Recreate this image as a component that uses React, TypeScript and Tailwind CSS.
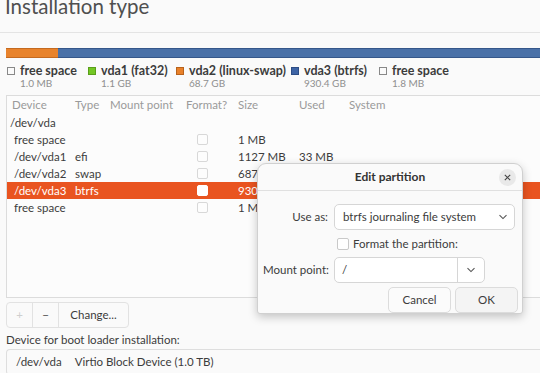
import React from "react";

const Check = ({ white = false }: { white?: boolean }) => (
  <div
    className={
      white
        ? "w-[11px] h-[11px] rounded-[2px] bg-white border border-white"
        : "w-[11px] h-[11px] rounded-[2px] bg-[#fdfdfd] border border-[#d8d8d8]"
    }
  />
);

const Chevron = () => (
  <svg width="10" height="6" viewBox="0 0 10 6" fill="none">
    <path d="M1.5 1.2 L5 4.6 L8.5 1.2" stroke="#555" strokeWidth="1.1" />
  </svg>
);

type Row = { dev: string; type?: string; size?: string; used?: string; check?: boolean; sel?: boolean; root?: boolean };

const rows: Row[] = [
  { dev: "/dev/vda", root: true },
  { dev: "free space", size: "1 MB", check: true },
  { dev: "/dev/vda1", type: "efi", size: "1127 MB", used: "33 MB", check: true },
  { dev: "/dev/vda2", type: "swap", size: "68719 MB", check: true },
  { dev: "/dev/vda3", type: "btrfs", size: "930351 MB", check: true, sel: true },
  { dev: "free space", size: "1 MB", check: true },
];

const legend = [
  { sq: "bg-[#fafafa] border border-[#888]", name: "free space", size: "1.0 MB", w: "w-[81px]" },
  { sq: "bg-[#73c724] border border-[#5a9e1a]", name: "vda1 (fat32)", size: "1.1 GB", w: "w-[88px]" },
  { sq: "bg-[#e8812a] border border-[#b8621b]", name: "vda2 (linux-swap)", size: "68.7 GB", w: "w-[115px]" },
  { sq: "bg-[#3e64a5] border border-[#2d4d85]", name: "vda3 (btrfs)", size: "930.4 GB", w: "w-[88px]" },
  { sq: "bg-[#fafafa] border border-[#888]", name: "free space", size: "1.8 MB", w: "w-[90px]" },
];

export default function App() {
  return (
    <div className="relative w-[540px] h-[373px] overflow-hidden bg-[#fafafa] text-[#3c3c3c] font-['Lato',sans-serif]">
      {/* header */}
      <div className="h-[33px] border-b border-[#e4e4e4] pl-[5px] overflow-hidden">
        <div className="text-[20.5px] leading-[21px] mt-[-4px] text-[#4f4f4f] whitespace-nowrap">Installation type</div>
      </div>

      {/* partition bar */}
      <div className="ml-[6px] mt-[15px] h-[10px] flex">
        <div className="w-[52px] bg-[#e8832c] border-y border-[#c46a20]" />
        <div className="flex-1 bg-[#4a71a8] border-y border-[#35578a]" />
      </div>

      {/* legend */}
      <div className="ml-[7px] mt-[7px] flex">
        {legend.map((l, i) => (
          <div key={i} className={`${l.w} flex`}>
            <div className={`w-[8px] h-[8px] mt-[2px] ${l.sq}`} />
            <div className="ml-[5px] whitespace-nowrap">
              <div className="text-[12.5px] leading-[12px] font-bold text-[#3c3c3c]">{l.name}</div>
              <div className="text-[10px] leading-[12px] mt-[0px] text-[#8f8f8f]">{l.size}</div>
            </div>
          </div>
        ))}
      </div>

      {/* table */}
      <div className="ml-[6px] mt-[6px] h-[203px] border border-[#dcdcdc] bg-[#fcfcfc] border-r-0">
        <div className="grid grid-cols-[63px_35px_76px_52px_61px_50px_1fr] h-[18px] items-center pl-[5px] text-[11.5px] text-[#9a9a9a] whitespace-nowrap">
          <div>Device</div>
          <div>Type</div>
          <div>Mount point</div>
          <div>Format?</div>
          <div>Size</div>
          <div>Used</div>
          <div>System</div>
        </div>
        {rows.map((r, i) => (
          <div
            key={i}
            className={`grid grid-cols-[68px_35px_76px_52px_61px_50px_1fr] h-[17px] items-center text-[11.5px] whitespace-nowrap ${
              r.sel ? "bg-[#e95420] text-white" : "text-[#3c3c3c]"
            }`}
          >
            <div className={r.root ? "pl-[3px]" : "pl-[7px]"}>{r.dev}</div>
            <div>{r.type ?? ""}</div>
            <div />
            <div className="pl-[11px]">{r.check ? <Check white={r.sel} /> : null}</div>
            <div>{r.size ?? ""}</div>
            <div>{r.used ?? ""}</div>
            <div />
          </div>
        ))}
      </div>

      {/* buttons */}
      <div className="ml-[6px] mt-[4px] w-[123px] h-[26px] flex border border-[#e2e2e2] rounded-[4px] bg-[#fafafa] text-[11.5px]">
        <div className="w-[26px] flex items-center justify-center text-[#cfcfcf] border-r border-[#e2e2e2]">+</div>
        <div className="w-[26px] flex items-center justify-center text-[#555] border-r border-[#e2e2e2]">−</div>
        <div className="flex-1 flex items-center justify-center text-[#3c3c3c]">Change...</div>
      </div>

      <div className="ml-[6px] mt-[5px] text-[11.5px] leading-[14px] text-[#3c3c3c]">Device for boot loader installation:</div>

      <div className="ml-[6px] mt-[2px] h-[26px] border border-[#dedede] border-r-0 rounded-l-[4px] bg-[#fafafa] flex items-center pl-[9px] text-[11.5px] whitespace-nowrap">
        <span>/dev/vda</span>
        <span className="ml-[13px]">Virtio Block Device (1.0 TB)</span>
      </div>

      {/* dialog */}
      <div className="absolute left-[257px] top-[163px] w-[266px] h-[151px] bg-[#fafafa] rounded-t-[9px] rounded-b-[3px] border border-[#d0d0d0] shadow-[0_3px_10px_rgba(0,0,0,0.22)] flex flex-col">
        <div className="h-[28px] border-b border-[#e0e0e0] relative flex items-center justify-center">
          <div className="text-[12px] font-bold text-[#333]">Edit partition</div>
          <div className="absolute right-[6px] top-[5px] w-[17px] h-[17px] rounded-full bg-[#e9e9e9] flex items-center justify-center">
            <svg width="7" height="7" viewBox="0 0 7 7">
              <path d="M0.8 0.8 L6.2 6.2 M6.2 0.8 L0.8 6.2" stroke="#444" strokeWidth="1.1" />
            </svg>
          </div>
        </div>
        <div className="pl-[5px] pr-[7px] pt-[13px] text-[11.5px] whitespace-nowrap">
          <div className="grid grid-cols-[65px_1fr] gap-x-[6px] items-center">
            <div className="text-right text-[#3c3c3c]">Use as:</div>
            <div className="h-[26px] rounded-[5px] border border-[#d6d6d6] bg-white flex items-center justify-between pl-[8px] pr-[6px]">
              <span>btrfs journaling file system</span>
              <Chevron />
            </div>
            <div />
            <div className="h-[27px] flex items-center pl-[3px]">
              <div className="w-[12px] h-[12px] rounded-[2px] border border-[#c9c9c9] bg-white" />
              <span className="ml-[4px]">Format the partition:</span>
            </div>
            <div className="text-right">Mount point:</div>
            <div className="w-[151px] h-[26px] rounded-[5px] border border-[#d6d6d6] bg-white flex">
              <div className="flex-1 flex items-center pl-[7px] border-r border-[#d6d6d6]">/</div>
              <div className="w-[26px] flex items-center justify-center">
                <Chevron />
              </div>
            </div>
          </div>
          <div className="flex justify-end gap-[4px] mt-[4px] mr-[-3px]">
            <div className="w-[63px] h-[26px] rounded-[5px] border border-[#dcdcdc] bg-[#fbfbfb] flex items-center justify-center">Cancel</div>
            <div className="w-[63px] h-[26px] rounded-[5px] border border-[#dcdcdc] bg-[#f4f4f4] flex items-center justify-center">OK</div>
          </div>
        </div>
      </div>
    </div>
  );
}
